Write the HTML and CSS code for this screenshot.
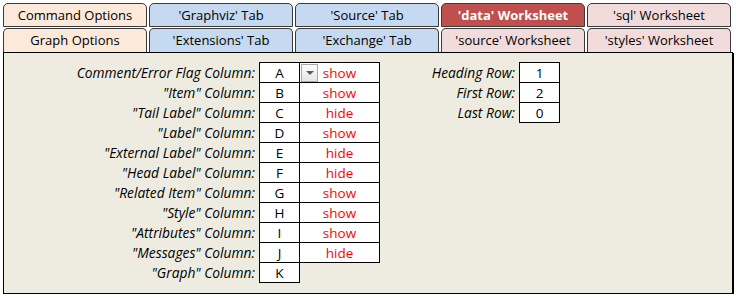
FILE: index.html
```html
<!DOCTYPE html>
<html lang="en">
	<head>
		<meta charset="utf-8" />
		<title>Graph Options</title>
		<link rel="stylesheet" href="styles.css">
	</head>
	<body>
		<div class="tabs">
			<div class="tab-row">
				<div class="tab peach">Command Options</div>
				<div class="tab blue">'Graphviz' Tab</div>
				<div class="tab blue">'Source' Tab</div>
				<div class="tab active">'data' Worksheet</div>
				<div class="tab pink">'sql' Worksheet</div>
			</div>
			<div class="tab-row">
				<div class="tab peach">Graph Options</div>
				<div class="tab blue">'Extensions' Tab</div>
				<div class="tab blue">'Exchange' Tab</div>
				<div class="tab pink">'source' Worksheet</div>
				<div class="tab pink">'styles' Worksheet</div>
			</div>
		</div>
		<div class="panel">
			<table class="columns">
				<tr>
					<td class="label">Comment/Error Flag Column:</td>
					<td class="cell">A</td>
					<td class="cell flag">
						<span class="dropdown"><span class="arrow"></span></span>
						show
					</td>
				</tr>
				<tr><td class="label">"Item" Column:</td><td class="cell">B</td><td class="cell flag">show</td></tr>
				<tr><td class="label">"Tail Label" Column:</td><td class="cell">C</td><td class="cell flag">hide</td></tr>
				<tr><td class="label">"Label" Column:</td><td class="cell">D</td><td class="cell flag">show</td></tr>
				<tr><td class="label">"External Label" Column:</td><td class="cell">E</td><td class="cell flag">hide</td></tr>
				<tr><td class="label">"Head Label" Column:</td><td class="cell">F</td><td class="cell flag">hide</td></tr>
				<tr><td class="label">"Related Item" Column:</td><td class="cell">G</td><td class="cell flag">show</td></tr>
				<tr><td class="label">"Style" Column:</td><td class="cell">H</td><td class="cell flag">show</td></tr>
				<tr><td class="label">"Attributes" Column:</td><td class="cell">I</td><td class="cell flag">show</td></tr>
				<tr><td class="label">"Messages" Column:</td><td class="cell">J</td><td class="cell flag">hide</td></tr>
				<tr><td class="label">"Graph" Column:</td><td class="cell">K</td><td></td></tr>
			</table>
			<table class="rows">
				<tr><td class="label">Heading Row:</td><td class="cell">1</td></tr>
				<tr><td class="label">First Row:</td><td class="cell">2</td></tr>
				<tr><td class="label">Last Row:</td><td class="cell">0</td></tr>
			</table>
		</div>
	</body>
</html>
```

FILE: styles.css
```css
body {
	margin: 0;
	background: #ffffff;
	font-family: "Open Sans", "Noto Sans", sans-serif;
	font-size: 13px;
	color: #000000;
}

.tabs {
	padding: 3px 0 0 3px;
}

.tab-row {
	display: flex;
	gap: 2px;
	margin-bottom: 1px;
}
.tab-row + .tab-row {
	margin-bottom: 0;
}

.tab {
	width: 142px;
	height: 22px;
	line-height: 22px;
	text-align: center;
	border: 1px solid #3a3a3a;
	border-radius: 5px 5px 0 0;
}
.tab-row + .tab-row .tab {
	border-bottom: none;
	height: 23px;
}

.peach { background: #fde9d9; }
.blue { background: #c5d9f1; }
.pink { background: #f2dcdb; }
.active {
	background: #c0504d;
	color: #ffffff;
	font-weight: bold;
}

.panel {
	margin-left: 3px;
	width: 728px;
	height: 240px;
	background: #eeece1;
	border: 1px solid #000000;
	box-shadow: 1px 1px 0 #000000;
	display: flex;
	align-items: flex-start;
}

table {
	border-collapse: collapse;
	margin-top: 9px;
}
tr {
	height: 20px;
}
td {
	padding: 0;
	white-space: nowrap;
}
.label {
	font-style: italic;
	font-size: 13.8px;
	text-align: right;
	padding-right: 4px;
}
.columns .label {
	width: 251px;
}
.rows {
	margin-left: 10px;
}
.rows .label {
	width: 125px;
}
.cell {
	width: 39px;
	font-size: 13.5px;
	text-align: center;
	background: #ffffff;
	border: 1px solid #000000;
}
.flag {
	width: 79px;
	font-size: 13.5px;
	color: #ff0000;
	position: relative;
}

.dropdown {
	position: absolute;
	left: 1px;
	top: 1px;
	width: 15px;
	height: 16px;
	border: 1px solid #a9abb0;
	background: linear-gradient(#fdfdfd, #e6e6e6);
}
.arrow {
	position: absolute;
	left: 4px;
	top: 6px;
	border-left: 4px solid transparent;
	border-right: 4px solid transparent;
	border-top: 4px solid #5a5a5a;
}
```
